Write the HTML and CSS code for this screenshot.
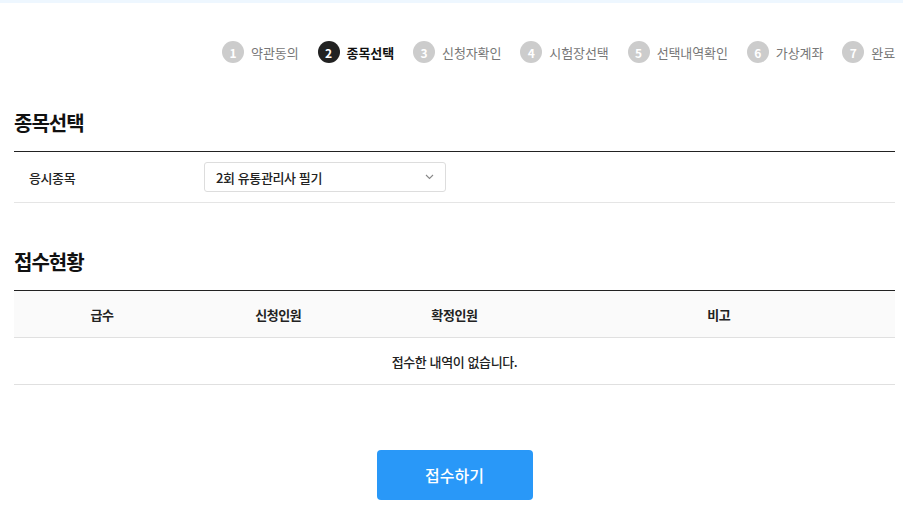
FILE: index.html
```html
<!DOCTYPE html>
<html lang="ko">
<head>
    <meta charset="UTF-8">
    <meta name="viewport" content="width=device-width, initial-scale=1.0">
    <title>종목선택</title>
    <link rel="stylesheet" href="styles.css">
</head>
<body>
    <div class="topbar"></div>
    <div class="page">
        <ol class="steps">
            <li class="step"><span class="step-num">1</span>약관동의</li>
            <li class="step active"><span class="step-num">2</span>종목선택</li>
            <li class="step"><span class="step-num">3</span>신청자확인</li>
            <li class="step"><span class="step-num">4</span>시험장선택</li>
            <li class="step"><span class="step-num">5</span>선택내역확인</li>
            <li class="step"><span class="step-num">6</span>가상계좌</li>
            <li class="step"><span class="step-num">7</span>완료</li>
        </ol>

        <h2 class="section-title">종목선택</h2>
        <div class="form-table">
            <div class="form-row">
                <div class="form-label">응시종목</div>
                <div class="form-field">
                    <div class="select">
                        <span>2회 유통관리사 필기</span>
                        <svg class="chevron" width="9" height="6" viewBox="0 0 9 6">
                            <path d="M1 1l3.5 3.5L8 1" fill="none" stroke="#888" stroke-width="1.1"/>
                        </svg>
                    </div>
                </div>
            </div>
        </div>

        <h2 class="section-title second">접수현황</h2>
        <table class="status-table">
            <thead>
                <tr>
                    <th class="col-sm">급수</th>
                    <th class="col-sm">신청인원</th>
                    <th class="col-sm">확정인원</th>
                    <th>비고</th>
                </tr>
            </thead>
            <tbody>
                <tr>
                    <td colspan="4">접수한 내역이 없습니다.</td>
                </tr>
            </tbody>
        </table>

        <div class="actions">
            <button class="btn-submit">접수하기</button>
        </div>
    </div>
</body>
</html>
```

FILE: styles.css
```css
* {
    margin: 0;
    padding: 0;
    box-sizing: border-box;
}

body {
    font-family: 'Noto Sans CJK KR', 'Noto Sans', sans-serif;
    color: #222;
    background: #fff;
}

.topbar {
    height: 3px;
    background: #eef7ff;
}

.page {
    padding: 0 8px 0 14px;
}

.steps {
    list-style: none;
    display: flex;
    justify-content: flex-end;
    gap: 19px;
    margin-top: 38px;
    height: 22px;
}

.step {
    display: flex;
    align-items: center;
    gap: 7px;
    font-size: 13px;
    letter-spacing: -0.1px;
    color: #777;
}

.step-num {
    display: flex;
    align-items: center;
    justify-content: center;
    width: 22px;
    height: 22px;
    border-radius: 50%;
    background: #ccc;
    color: #fff;
    font-size: 12px;
    font-weight: bold;
    letter-spacing: 0;
}

.step.active {
    color: #111;
    font-weight: bold;
}

.step.active .step-num {
    background: #222;
}

.section-title {
    font-size: 20px;
    line-height: 28px;
    font-weight: bold;
    letter-spacing: -1px;
    color: #111;
    margin-top: 46px;
    margin-bottom: 14px;
}

.section-title.second {
    margin-top: 45px;
}

.form-table {
    border-top: 1px solid #222;
}

.form-row {
    display: flex;
    align-items: center;
    height: 51px;
    border-bottom: 1px solid #e5e5e5;
}

.form-label {
    width: 190px;
    padding-left: 15px;
    font-size: 13px;
    font-weight: 500;
    letter-spacing: -0.4px;
}

.select {
    display: flex;
    align-items: center;
    justify-content: space-between;
    width: 242px;
    height: 30px;
    padding: 0 11px 0 11px;
    border: 1px solid #ddd;
    border-radius: 3px;
    font-size: 13px;
    font-weight: 500;
    letter-spacing: -0.4px;
}

.status-table {
    width: 100%;
    border-collapse: collapse;
    border-top: 1px solid #222;
    font-size: 13px;
    letter-spacing: -0.4px;
}

.status-table th {
    height: 47px;
    background: #fafafa;
    font-weight: bold;
    border-bottom: 1px solid #e0e0e0;
}

.status-table .col-sm {
    width: 20%;
}

.status-table td {
    height: 47px;
    text-align: center;
    font-weight: 500;
    border-bottom: 1px solid #e0e0e0;
}

.actions {
    display: flex;
    justify-content: center;
    margin-top: 65px;
}

.btn-submit {
    width: 156px;
    height: 50px;
    border: none;
    border-radius: 4px;
    background: #2998f8;
    color: #fff;
    font-family: inherit;
    font-size: 16px;
    font-weight: 500;
    cursor: pointer;
}
```
